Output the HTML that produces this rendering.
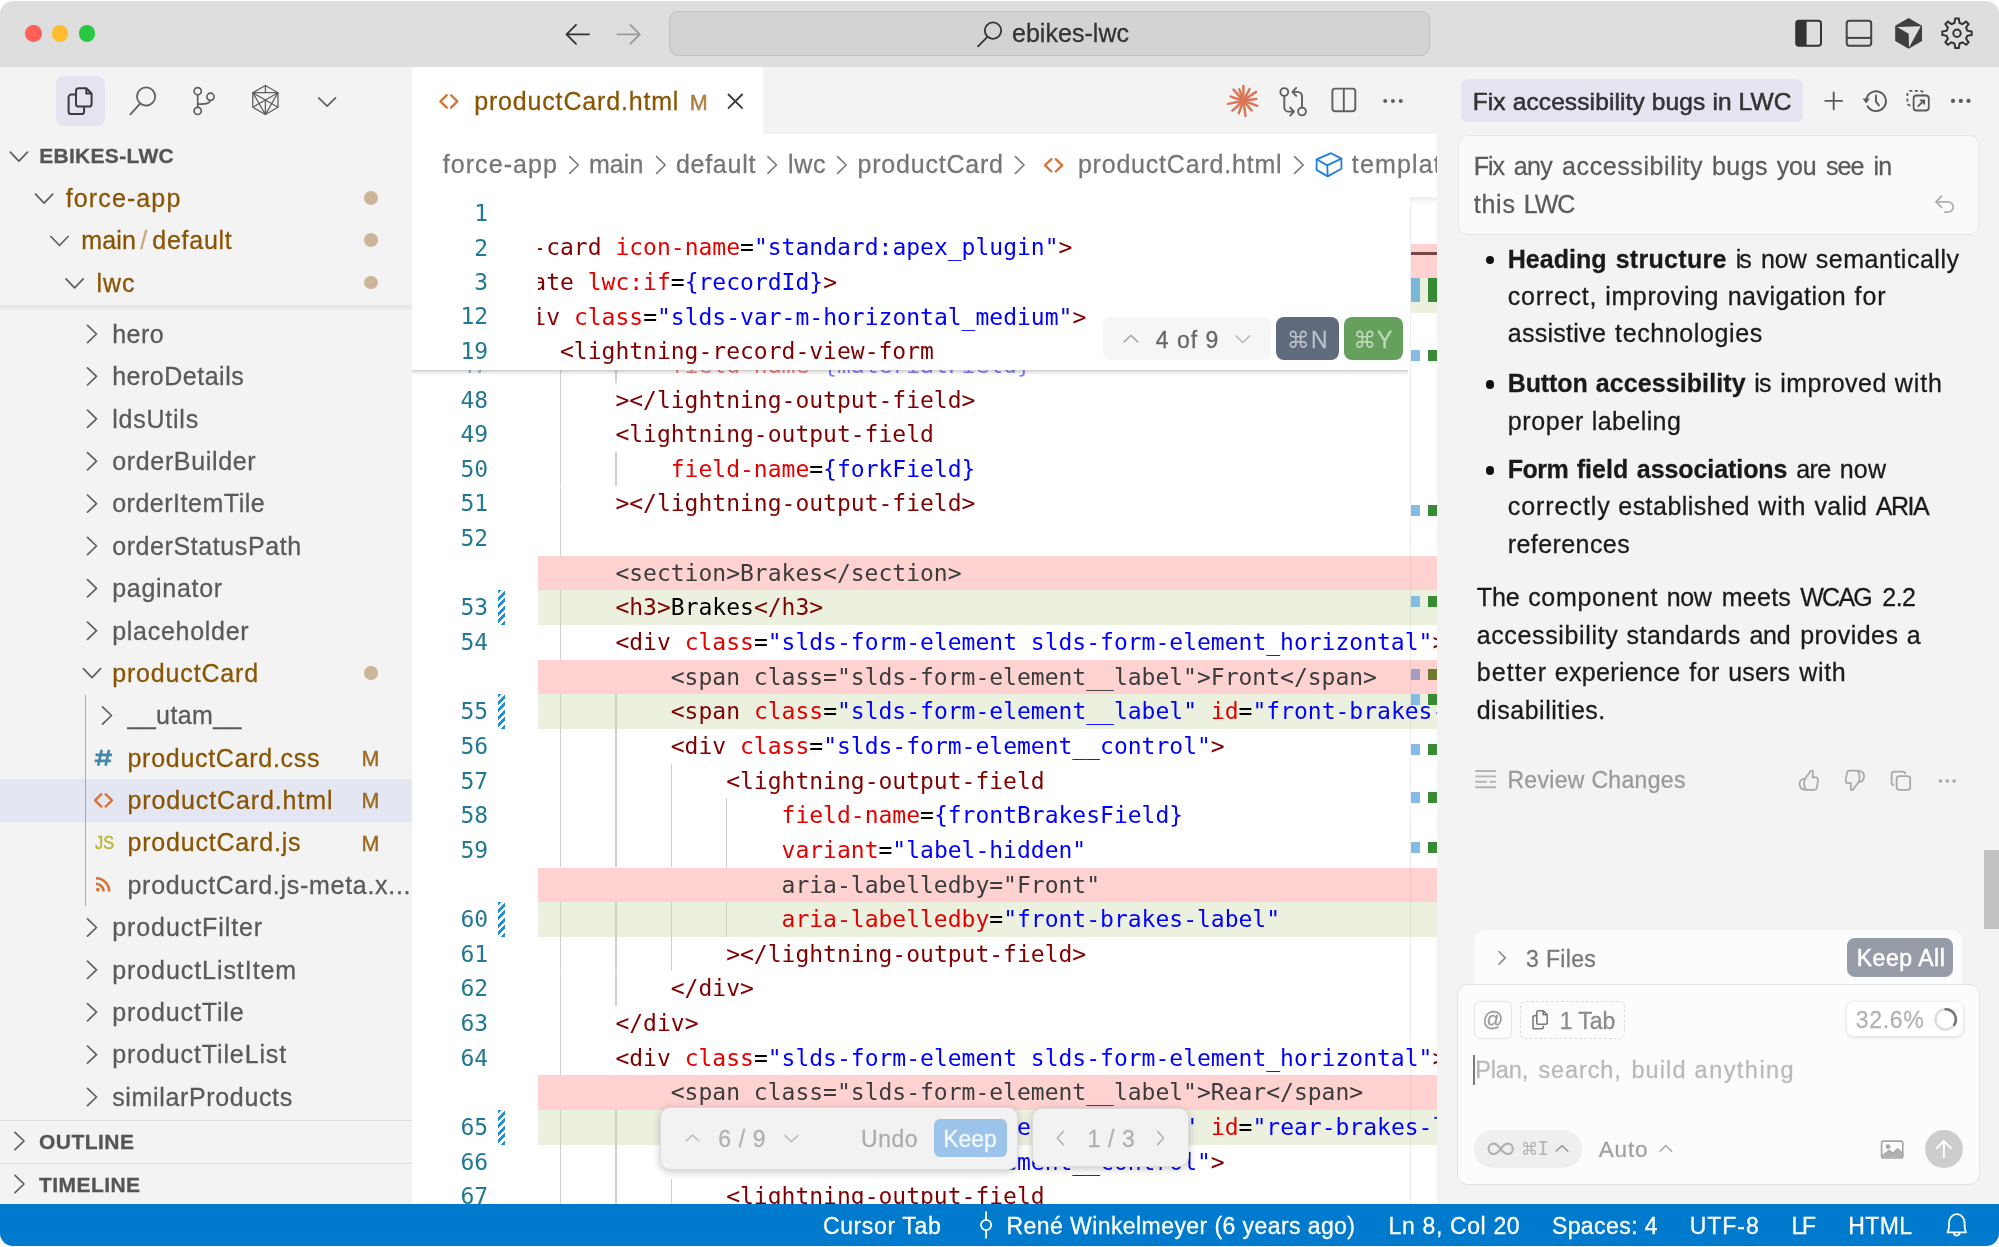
<!DOCTYPE html>
<html lang="en"><head><meta charset="utf-8"><title>ebikes-lwc</title>
<style>
html,body{margin:0;padding:0;background:#fff;}
body{width:1999px;height:1247px;overflow:hidden;position:relative;}
.fs{font-family:"Liberation Sans",sans-serif;-webkit-text-stroke:0.28px currentColor;}
.fm{font-family:"DejaVu Sans Mono","Liberation Mono",monospace;}
.t{position:absolute;white-space:pre;line-height:1;}
.a{position:absolute;box-sizing:border-box;}
#win{will-change:transform;position:absolute;left:0;top:0;width:1999px;height:1247px;overflow:hidden;background:#fff;clip-path:inset(1px 0px 1px 0px round 13px);}
#titlebar{position:absolute;left:0;top:0;width:1999px;height:67px;background:#dedede;}
#sidebar{position:absolute;left:0;top:67px;width:411.5px;height:1137px;background:#f3f3f3;}
#editor{position:absolute;left:411.5px;top:67px;width:1025.5px;height:1137px;background:#fff;}
#panel{position:absolute;left:1437px;top:67px;width:562px;height:1137px;background:#f3f3f3;}
#status{position:absolute;left:0;top:1204px;width:1999px;height:43px;background:#007acc;}
svg{position:absolute;overflow:visible;}
.ic{fill:none;stroke:#424242;stroke-width:1.9;stroke-linecap:round;stroke-linejoin:round;}
.k0{color:#800000}.k1{color:#e50000}.k2{color:#0000ff}.k3{color:#000}
.fd{font-family:"DejaVu Sans","Liberation Sans",sans-serif;}

</style></head>
<body>
<div id="win"><div id="titlebar"></div><div id="sidebar"></div><div id="editor"></div><div id="panel"></div><div id="status"></div><div class="a" style="left:25.0px;top:25.0px;width:16.6px;height:16.6px;border-radius:50%;background:#ff5f57;"></div><div class="a" style="left:51.9px;top:25.0px;width:16.6px;height:16.6px;border-radius:50%;background:#febc2e;"></div><div class="a" style="left:78.5px;top:25.0px;width:16.6px;height:16.6px;border-radius:50%;background:#28c840;"></div><div class="a" style="left:668.8px;top:11.0px;width:761.2px;height:44.6px;border-radius:9px;background:#d3d3d3;border:1.2px solid #c1c1c1;"></div><span class="t fs" style="top:21px;font-size:25px;color:#333;left:1012.00px;letter-spacing:0.033px;">ebikes-lwc</span><svg style="left:0;top:0" width="1999" height="1247" viewBox="0 0 1999 1247"><path d="M589.0 34.3H567.0M576.0 24.799999999999997L566.5 34.3L576.0 43.8" fill="none" stroke="#333" stroke-width="1.8" stroke-linecap="round" stroke-linejoin="round"/><g transform="translate(1256.6,0) scale(-1,1)"><path d="M639.3 34.3H617.3M626.3 24.799999999999997L616.8 34.3L626.3 43.8" fill="none" stroke="#9a9a9a" stroke-width="1.8" stroke-linecap="round" stroke-linejoin="round"/></g><circle cx="993" cy="30.6" r="8.2" fill="none" stroke="#333" stroke-width="1.8"/><path d="M987.4 36.8L978 46.4" stroke="#333" stroke-width="1.8" stroke-linecap="round"/></svg><svg style="left:0;top:0" width="1999" height="1247" viewBox="0 0 1999 1247"><rect x="1796.2" y="20.8" width="24.8" height="24.9" rx="2.6" fill="none" stroke="#333" stroke-width="2"/><path d="M1796.2 24 a3.2 3.2 0 0 1 3.2 -3.2 H1806.6 V45.7 H1799.4 a3.2 3.2 0 0 1 -3.2 -3.2Z" fill="#333"/><rect x="1846.7" y="20.8" width="24.5" height="24.9" rx="2.6" fill="none" stroke="#444" stroke-width="2"/><path d="M1846.7 37.9H1871.2" stroke="#444" stroke-width="2"/><path d="M1908.6 18 L1922 25.7 V41.1 L1908.6 48.8 L1895.2 41.1 V25.7Z" fill="#3f3f3f"/><path d="M1897.1 26.9 L1920.8 26.3 L1909 47.4 L1908.7 33.7Z" fill="#dedede"/><path d="M1954.44 22.91L1955.26 18.50L1958.74 18.50L1959.56 22.91L1962.47 24.12L1966.16 21.58L1968.62 24.04L1966.08 27.73L1967.29 30.64L1971.70 31.46L1971.70 34.94L1967.29 35.76L1966.08 38.67L1968.62 42.36L1966.16 44.82L1962.47 42.28L1959.56 43.49L1958.74 47.90L1955.26 47.90L1954.44 43.49L1951.53 42.28L1947.84 44.82L1945.38 42.36L1947.92 38.67L1946.71 35.76L1942.30 34.94L1942.30 31.46L1946.71 30.64L1947.92 27.73L1945.38 24.04L1947.84 21.58L1951.53 24.12Z" fill="none" stroke="#333" stroke-width="2" stroke-linejoin="miter"/><circle cx="1957" cy="33.2" r="3.7" fill="none" stroke="#333" stroke-width="2"/></svg><div class="a" style="left:56.0px;top:76.0px;width:49.3px;height:50.0px;border-radius:8px;background:#e4e4f1;"></div><svg style="left:0;top:0" width="1999" height="1247" viewBox="0 0 1999 1247"><path d="M75.7 94.6H71.2a2.6 2.6 0 0 0 -2.6 2.6V111.4a2.6 2.6 0 0 0 2.6 2.6H81.5a2.6 2.6 0 0 0 2.6 -2.6V107.3" fill="none" stroke="#3b3b3b" stroke-width="2" stroke-linejoin="round"/><path d="M78.6 88.2H86.3L91.6 93.5V103.9a2.6 2.6 0 0 1 -2.6 2.6H78.6a2.6 2.6 0 0 1 -2.6 -2.6V90.8a2.6 2.6 0 0 1 2.6 -2.6Z M86.3 88.2V93.5H91.6" fill="none" stroke="#3b3b3b" stroke-width="2" stroke-linejoin="round"/><circle cx="146.1" cy="96.5" r="9.1" fill="none" stroke="#5f5f5f" stroke-width="1.8"/><path d="M140.1 103.6L130.4 114.3" stroke="#5f5f5f" stroke-width="1.8" stroke-linecap="round"/><g fill="none" stroke="#5f5f5f" stroke-width="1.7"><circle cx="197.7" cy="91.2" r="3.6"/><circle cx="197.7" cy="110.9" r="3.6"/><circle cx="210.5" cy="96.8" r="3.6"/><path d="M197.7 94.8V107.3M197.7 104.2C205 103.8 209.6 104 210.3 100.4"/></g><g fill="none" stroke="#5f5f5f" stroke-width="1.3" stroke-linejoin="round"><path d="M265.4 85.5L278 92.7V107.3L265.4 114.5L252.8 107.3V92.7Z"/><path d="M252.8 92.7H278L265.4 114.5ZM265.4 85.5V92.7M252.8 92.7L265.4 100L278 92.7M265.4 100V114.5M252.8 107.3L265.4 100M265.4 100L278 107.3M270 106.5L278 92.7"/></g><polyline points="318.7,97.8 327.1,106.2 335.5,97.8" fill="none" stroke="#5f5f5f" stroke-width="1.7" stroke-linecap="round" stroke-linejoin="round"/></svg><span class="t fs" style="top:145px;font-size:21px;color:#555;left:39.20px;font-weight:700;letter-spacing:0.295px;">EBIKES-LWC</span><span class="t fs" style="top:186px;font-size:25px;color:#895503;left:65.80px;letter-spacing:1.109px;">force-app</span><span class="t fs" style="top:228px;font-size:25px;color:#895503;left:81.20px;letter-spacing:0.171px;">main</span><span class="t fs" style="top:228px;font-size:25px;color:#c9a97c;left:140.30px;">/</span><span class="t fs" style="top:228px;font-size:25px;color:#895503;left:152.30px;letter-spacing:0.740px;">default</span><span class="t fs" style="top:271px;font-size:25px;color:#895503;left:96.60px;letter-spacing:0.945px;">lwc</span><div class="a" style="left:364.1px;top:190.9px;width:13.8px;height:13.8px;border-radius:50%;background:#cdb599;"></div><div class="a" style="left:364.1px;top:233.3px;width:13.8px;height:13.8px;border-radius:50%;background:#cdb599;"></div><div class="a" style="left:364.1px;top:275.7px;width:13.8px;height:13.8px;border-radius:50%;background:#cdb599;"></div><div class="a" style="left:364.1px;top:666.0px;width:13.8px;height:13.8px;border-radius:50%;background:#cdb599;"></div><div class="a" style="left:0.0px;top:304.5px;width:411.5px;height:6.5px;background:linear-gradient(#e3e3e3,#f3f3f3);"></div><span class="t fs" style="top:322px;font-size:25px;color:#5a5a5a;left:112.20px;letter-spacing:0.484px;">hero</span><span class="t fs" style="top:364px;font-size:25px;color:#5a5a5a;left:112.20px;letter-spacing:0.505px;">heroDetails</span><span class="t fs" style="top:407px;font-size:25px;color:#5a5a5a;left:112.20px;letter-spacing:0.775px;">ldsUtils</span><span class="t fs" style="top:449px;font-size:25px;color:#5a5a5a;left:112.20px;letter-spacing:0.665px;">orderBuilder</span><span class="t fs" style="top:491px;font-size:25px;color:#5a5a5a;left:112.20px;letter-spacing:0.513px;">orderItemTile</span><span class="t fs" style="top:534px;font-size:25px;color:#5a5a5a;left:112.20px;letter-spacing:0.595px;">orderStatusPath</span><span class="t fs" style="top:576px;font-size:25px;color:#5a5a5a;left:112.20px;letter-spacing:0.719px;">paginator</span><span class="t fs" style="top:619px;font-size:25px;color:#5a5a5a;left:112.20px;letter-spacing:0.723px;">placeholder</span><span class="t fs" style="top:661px;font-size:25px;color:#895503;left:112.20px;letter-spacing:0.842px;">productCard</span><div class="a" style="left:0.0px;top:779.0px;width:411.5px;height:42.5px;background:#e4e6f1;"></div><div class="a" style="left:85.0px;top:695.0px;width:1.2px;height:210.5px;background:#a9a9a9;"></div><span class="t fs" style="top:703px;font-size:25px;color:#5a5a5a;left:127.50px;letter-spacing:0.400px;">__utam__</span><span class="t fs" style="top:746px;font-size:25px;color:#895503;left:127.50px;letter-spacing:0.712px;">productCard.css</span><span class="t fs" style="top:749px;font-size:21.5px;color:#9c6c22;left:361.60px;-webkit-text-stroke:0.45px #9c6c22;">M</span><span class="t fs" style="top:788px;font-size:25px;color:#895503;left:127.50px;letter-spacing:0.883px;">productCard.html</span><span class="t fs" style="top:791px;font-size:21.5px;color:#9c6c22;left:361.60px;-webkit-text-stroke:0.45px #9c6c22;">M</span><span class="t fs" style="top:830px;font-size:25px;color:#895503;left:127.50px;letter-spacing:0.802px;">productCard.js</span><span class="t fs" style="top:834px;font-size:21.5px;color:#9c6c22;left:361.60px;-webkit-text-stroke:0.45px #9c6c22;">M</span><span class="t fs" style="top:873px;font-size:25px;color:#5a5a5a;left:127.50px;letter-spacing:0.706px;">productCard.js-meta.x...</span><span class="t fs" style="top:915px;font-size:25px;color:#5a5a5a;left:112.20px;letter-spacing:0.921px;">productFilter</span><span class="t fs" style="top:958px;font-size:25px;color:#5a5a5a;left:112.20px;letter-spacing:0.934px;">productListItem</span><span class="t fs" style="top:1000px;font-size:25px;color:#5a5a5a;left:112.20px;letter-spacing:0.875px;">productTile</span><span class="t fs" style="top:1042px;font-size:25px;color:#5a5a5a;left:112.20px;letter-spacing:0.882px;">productTileList</span><span class="t fs" style="top:1085px;font-size:25px;color:#5a5a5a;left:112.20px;letter-spacing:0.652px;">similarProducts</span><span class="t fs" style="top:833px;font-size:19px;color:#b8b83a;left:94.60px;-webkit-text-stroke:0.5px #b8b83a;transform:scaleX(0.86);transform-origin:0 0;">JS</span><div class="a" style="left:0.0px;top:1120.0px;width:411.5px;height:1.3px;background:#dcdcdc;"></div><div class="a" style="left:0.0px;top:1162.7px;width:411.5px;height:1.3px;background:#dcdcdc;"></div><span class="t fs" style="top:1131px;font-size:21px;color:#555;left:39.00px;font-weight:700;letter-spacing:0.471px;">OUTLINE</span><span class="t fs" style="top:1174px;font-size:21px;color:#555;left:39.00px;font-weight:700;letter-spacing:0.429px;">TIMELINE</span><svg style="left:0;top:0" width="1999" height="1247" viewBox="0 0 1999 1247"><polyline points="10.3,152.1 18.9,161.1 27.5,152.1" fill="none" stroke="#5f5f5f" stroke-width="1.7" stroke-linecap="round" stroke-linejoin="round"/><polyline points="35.5,194.1 44.1,203.1 52.7,194.1" fill="none" stroke="#5f5f5f" stroke-width="1.7" stroke-linecap="round" stroke-linejoin="round"/><polyline points="50.9,236.5 59.5,245.5 68.1,236.5" fill="none" stroke="#5f5f5f" stroke-width="1.7" stroke-linecap="round" stroke-linejoin="round"/><polyline points="66.0,278.9 74.6,287.9 83.2,278.9" fill="none" stroke="#5f5f5f" stroke-width="1.7" stroke-linecap="round" stroke-linejoin="round"/><polyline points="87.5,325.4 96.5,334.0 87.5,342.6" fill="none" stroke="#5f5f5f" stroke-width="1.7" stroke-linecap="round" stroke-linejoin="round"/><polyline points="87.5,367.8 96.5,376.4 87.5,385.0" fill="none" stroke="#5f5f5f" stroke-width="1.7" stroke-linecap="round" stroke-linejoin="round"/><polyline points="87.5,410.2 96.5,418.8 87.5,427.4" fill="none" stroke="#5f5f5f" stroke-width="1.7" stroke-linecap="round" stroke-linejoin="round"/><polyline points="87.5,452.6 96.5,461.2 87.5,469.8" fill="none" stroke="#5f5f5f" stroke-width="1.7" stroke-linecap="round" stroke-linejoin="round"/><polyline points="87.5,495.0 96.5,503.6 87.5,512.2" fill="none" stroke="#5f5f5f" stroke-width="1.7" stroke-linecap="round" stroke-linejoin="round"/><polyline points="87.5,537.4 96.5,546.0 87.5,554.6" fill="none" stroke="#5f5f5f" stroke-width="1.7" stroke-linecap="round" stroke-linejoin="round"/><polyline points="87.5,579.7 96.5,588.3 87.5,596.9" fill="none" stroke="#5f5f5f" stroke-width="1.7" stroke-linecap="round" stroke-linejoin="round"/><polyline points="87.5,622.1 96.5,630.7 87.5,639.3" fill="none" stroke="#5f5f5f" stroke-width="1.7" stroke-linecap="round" stroke-linejoin="round"/><polyline points="83.4,668.6 92.0,677.6 100.6,668.6" fill="none" stroke="#5f5f5f" stroke-width="1.7" stroke-linecap="round" stroke-linejoin="round"/><polyline points="102.5,706.9 111.5,715.5 102.5,724.1" fill="none" stroke="#5f5f5f" stroke-width="1.7" stroke-linecap="round" stroke-linejoin="round"/><polyline points="87.5,918.9 96.5,927.5 87.5,936.1" fill="none" stroke="#5f5f5f" stroke-width="1.7" stroke-linecap="round" stroke-linejoin="round"/><polyline points="87.5,961.2 96.5,969.9 87.5,978.5" fill="none" stroke="#5f5f5f" stroke-width="1.7" stroke-linecap="round" stroke-linejoin="round"/><polyline points="87.5,1003.6 96.5,1012.2 87.5,1020.8" fill="none" stroke="#5f5f5f" stroke-width="1.7" stroke-linecap="round" stroke-linejoin="round"/><polyline points="87.5,1046.0 96.5,1054.6 87.5,1063.2" fill="none" stroke="#5f5f5f" stroke-width="1.7" stroke-linecap="round" stroke-linejoin="round"/><polyline points="87.5,1088.4 96.5,1097.0 87.5,1105.6" fill="none" stroke="#5f5f5f" stroke-width="1.7" stroke-linecap="round" stroke-linejoin="round"/><g stroke="#4289a8" stroke-width="2.7" stroke-linecap="butt"><path d="M101.6 749.8L98.2 765.8M109 749.8L105.600 765.8M95.6 754.9H112M94.600 760.9H111"/></g><polyline points="101.4,794.2 95.0,800.4 101.4,806.6" fill="none" stroke="#d4733a" stroke-width="2.3" stroke-linecap="round" stroke-linejoin="round"/><polyline points="105.6,794.2 112.0,800.4 105.6,806.6" fill="none" stroke="#d4733a" stroke-width="2.3" stroke-linecap="round" stroke-linejoin="round"/><g fill="none" stroke="#d4733a" stroke-width="2.6" stroke-linecap="butt"><path d="M96 878.2a13.2 13.2 0 0 1 13.2 13.2"/><path d="M96 883.8a7.6 7.6 0 0 1 7.6 7.6"/></g><circle cx="97.9" cy="889.6" r="1.9" fill="#d4733a"/><polyline points="15.0,1132.4 24.0,1141.0 15.0,1149.6" fill="none" stroke="#5f5f5f" stroke-width="1.7" stroke-linecap="round" stroke-linejoin="round"/><polyline points="15.0,1175.4 24.0,1184.0 15.0,1192.6" fill="none" stroke="#5f5f5f" stroke-width="1.7" stroke-linecap="round" stroke-linejoin="round"/></svg><div class="a" style="left:411.5px;top:67.0px;width:1025.5px;height:67.4px;background:#f3f3f3;"></div><div class="a" style="left:411.5px;top:67.0px;width:351.4px;height:67.4px;background:#fff;"></div><span class="t fs" style="top:89px;font-size:25px;color:#895503;left:474.20px;letter-spacing:0.830px;">productCard.html</span><span class="t fs" style="top:93px;font-size:21.5px;color:#ad8040;left:689.80px;-webkit-text-stroke:0.5px #ad8040;">M</span><span class="t fs" style="top:152px;font-size:25px;color:#767676;left:442.70px;letter-spacing:1.072px;">force-app</span><span class="t fs" style="top:152px;font-size:25px;color:#767676;left:589.00px;letter-spacing:0.037px;">main</span><span class="t fs" style="top:152px;font-size:25px;color:#767676;left:675.90px;letter-spacing:0.740px;">default</span><span class="t fs" style="top:152px;font-size:25px;color:#767676;left:788.00px;letter-spacing:0.645px;">lwc</span><span class="t fs" style="top:152px;font-size:25px;color:#767676;left:857.60px;letter-spacing:0.772px;">productCard</span><span class="t fs" style="top:152px;font-size:25px;color:#767676;left:1077.90px;letter-spacing:0.797px;">productCard.html</span><div class="a" style="left:1351.8px;top:140.0px;width:85.2px;height:55.0px;overflow:hidden;"><span class="t fs" style="top:12px;font-size:25px;color:#767676;left:0.00px;letter-spacing:1.158px;">template</span></div><svg style="left:0;top:0" width="1999" height="1247" viewBox="0 0 1999 1247"><polyline points="569.7,156.6 578.3,165.0 569.7,173.4" fill="none" stroke="#7a7a7a" stroke-width="1.6" stroke-linecap="round" stroke-linejoin="round"/><polyline points="656.6,156.6 665.2,165.0 656.6,173.4" fill="none" stroke="#7a7a7a" stroke-width="1.6" stroke-linecap="round" stroke-linejoin="round"/><polyline points="767.9,156.6 776.5,165.0 767.9,173.4" fill="none" stroke="#7a7a7a" stroke-width="1.6" stroke-linecap="round" stroke-linejoin="round"/><polyline points="837.6,156.6 846.2,165.0 837.6,173.4" fill="none" stroke="#7a7a7a" stroke-width="1.6" stroke-linecap="round" stroke-linejoin="round"/><polyline points="1015.4,156.6 1024.0,165.0 1015.4,173.4" fill="none" stroke="#7a7a7a" stroke-width="1.6" stroke-linecap="round" stroke-linejoin="round"/><polyline points="1294.6,156.6 1303.2,165.0 1294.6,173.4" fill="none" stroke="#7a7a7a" stroke-width="1.6" stroke-linecap="round" stroke-linejoin="round"/><polyline points="446.8,95.2 440.4,101.4 446.8,107.6" fill="none" stroke="#d4733a" stroke-width="2.3" stroke-linecap="round" stroke-linejoin="round"/><polyline points="451.0,95.2 457.4,101.4 451.0,107.6" fill="none" stroke="#d4733a" stroke-width="2.3" stroke-linecap="round" stroke-linejoin="round"/><polyline points="1051.4,159.1 1045.0,165.3 1051.4,171.5" fill="none" stroke="#d4733a" stroke-width="2.3" stroke-linecap="round" stroke-linejoin="round"/><polyline points="1055.8,159.1 1062.2,165.3 1055.8,171.5" fill="none" stroke="#d4733a" stroke-width="2.3" stroke-linecap="round" stroke-linejoin="round"/><path d="M728 94L742.6 108.6M742.6 94L728 108.6" stroke="#3b3b3b" stroke-width="1.9" stroke-linecap="butt"/><g fill="none" stroke="#1f7fdc" stroke-width="1.8" stroke-linejoin="round"><path d="M1316.6 159.3L1331.1 153.200L1341.4 158.6V168.8L1327.7 176.400L1316.6 169.9Z"/><path d="M1316.6 159.3L1327.2 165.4L1341.4 158.6M1327.2 165.4L1327.7 176.400"/></g></svg><div class="a" style="left:538.0px;top:197.0px;width:899.0px;height:1007.0px;overflow:hidden;"><span class="t fm" style="top:157px;font-size:23px;color:#000;left:132.78px;opacity:0.5;"><span class="k1">field-name</span><span class="k3">=</span><span class="k2">{materialField}</span></span><div class="a" style="left:22.0px;top:172.0px;width:1.3px;height:13.6px;background:#d0d0d0;"></div><div class="a" style="left:77.4px;top:172.0px;width:1.3px;height:13.6px;background:#d0d0d0;"></div><div class="a" style="left:22.0px;top:185.6px;width:1.3px;height:34.6px;background:#d0d0d0;"></div><span class="t fm" style="top:192px;font-size:23px;color:#000;left:77.39px;"><span class="k0">&gt;</span><span class="k0">&lt;/lightning-output-field</span><span class="k0">&gt;</span></span><div class="a" style="left:22.0px;top:220.2px;width:1.3px;height:34.6px;background:#d0d0d0;"></div><span class="t fm" style="top:226px;font-size:23px;color:#000;left:77.39px;"><span class="k0">&lt;lightning-output-field</span></span><div class="a" style="left:22.0px;top:254.8px;width:1.3px;height:34.6px;background:#d0d0d0;"></div><div class="a" style="left:77.4px;top:254.8px;width:1.3px;height:34.6px;background:#d0d0d0;"></div><span class="t fm" style="top:261px;font-size:23px;color:#000;left:132.78px;"><span class="k1">field-name</span><span class="k3">=</span><span class="k2">{forkField}</span></span><div class="a" style="left:22.0px;top:289.5px;width:1.3px;height:34.6px;background:#d0d0d0;"></div><span class="t fm" style="top:295px;font-size:23px;color:#000;left:77.39px;"><span class="k0">&gt;</span><span class="k0">&lt;/lightning-output-field</span><span class="k0">&gt;</span></span><div class="a" style="left:22.0px;top:324.1px;width:1.3px;height:34.6px;background:#d0d0d0;"></div><div class="a" style="left:0.0px;top:358.8px;width:900.0px;height:34.6px;background:#ffd2d2;"></div><span class="t fm" style="top:365px;font-size:23px;color:#3b3b3b;left:77.39px;"><span class="kr">&lt;section&gt;Brakes&lt;/section&gt;</span></span><div class="a" style="left:0.0px;top:393.4px;width:900.0px;height:34.6px;background:#ebf0df;"></div><div class="a" style="left:22.0px;top:393.4px;width:1.3px;height:34.6px;background:#cfd3c6;"></div><span class="t fm" style="top:399px;font-size:23px;color:#000;left:77.39px;"><span class="k0">&lt;h3</span><span class="k0">&gt;</span><span class="k3">Brakes</span><span class="k0">&lt;/h3</span><span class="k0">&gt;</span></span><div class="a" style="left:22.0px;top:428.1px;width:1.3px;height:34.6px;background:#d0d0d0;"></div><span class="t fm" style="top:434px;font-size:23px;color:#000;left:77.39px;"><span class="k0">&lt;div</span><span class="k3"> </span><span class="k1">class</span><span class="k3">=</span><span class="k2">"slds-form-element slds-form-element_horizontal"</span><span class="k0">&gt;</span></span><div class="a" style="left:0.0px;top:462.7px;width:900.0px;height:34.6px;background:#ffd2d2;"></div><span class="t fm" style="top:469px;font-size:23px;color:#3b3b3b;left:132.78px;"><span class="kr">&lt;span class="slds-form-element__label"&gt;Front&lt;/span&gt;</span></span><div class="a" style="left:0.0px;top:497.3px;width:900.0px;height:34.6px;background:#ebf0df;"></div><div class="a" style="left:22.0px;top:497.3px;width:1.3px;height:34.6px;background:#cfd3c6;"></div><div class="a" style="left:77.4px;top:497.3px;width:1.3px;height:34.6px;background:#cfd3c6;"></div><span class="t fm" style="top:503px;font-size:23px;color:#000;left:132.78px;"><span class="k0">&lt;span</span><span class="k3"> </span><span class="k1">class</span><span class="k3">=</span><span class="k2">"slds-form-element__label"</span><span class="k3"> </span><span class="k1">id</span><span class="k3">=</span><span class="k2">"front-brakes-label"</span><span class="k0">&gt;</span><span class="k3">Front</span><span class="k0">&lt;/span</span><span class="k0">&gt;</span></span><div class="a" style="left:22.0px;top:532.0px;width:1.3px;height:34.6px;background:#d0d0d0;"></div><div class="a" style="left:77.4px;top:532.0px;width:1.3px;height:34.6px;background:#d0d0d0;"></div><span class="t fm" style="top:538px;font-size:23px;color:#000;left:132.78px;"><span class="k0">&lt;div</span><span class="k3"> </span><span class="k1">class</span><span class="k3">=</span><span class="k2">"slds-form-element__control"</span><span class="k0">&gt;</span></span><div class="a" style="left:22.0px;top:566.6px;width:1.3px;height:34.6px;background:#d0d0d0;"></div><div class="a" style="left:77.4px;top:566.6px;width:1.3px;height:34.6px;background:#d0d0d0;"></div><div class="a" style="left:132.8px;top:566.6px;width:1.3px;height:34.6px;background:#d0d0d0;"></div><span class="t fm" style="top:573px;font-size:23px;color:#000;left:188.16px;"><span class="k0">&lt;lightning-output-field</span></span><div class="a" style="left:22.0px;top:601.3px;width:1.3px;height:34.6px;background:#d0d0d0;"></div><div class="a" style="left:77.4px;top:601.3px;width:1.3px;height:34.6px;background:#d0d0d0;"></div><div class="a" style="left:132.8px;top:601.3px;width:1.3px;height:34.6px;background:#d0d0d0;"></div><div class="a" style="left:188.2px;top:601.3px;width:1.3px;height:34.6px;background:#d0d0d0;"></div><span class="t fm" style="top:607px;font-size:23px;color:#000;left:243.55px;"><span class="k1">field-name</span><span class="k3">=</span><span class="k2">{frontBrakesField}</span></span><div class="a" style="left:22.0px;top:635.9px;width:1.3px;height:34.6px;background:#d0d0d0;"></div><div class="a" style="left:77.4px;top:635.9px;width:1.3px;height:34.6px;background:#d0d0d0;"></div><div class="a" style="left:132.8px;top:635.9px;width:1.3px;height:34.6px;background:#d0d0d0;"></div><div class="a" style="left:188.2px;top:635.9px;width:1.3px;height:34.6px;background:#d0d0d0;"></div><span class="t fm" style="top:642px;font-size:23px;color:#000;left:243.55px;"><span class="k1">variant</span><span class="k3">=</span><span class="k2">"label-hidden"</span></span><div class="a" style="left:0.0px;top:670.6px;width:900.0px;height:34.6px;background:#ffd2d2;"></div><span class="t fm" style="top:677px;font-size:23px;color:#3b3b3b;left:243.55px;"><span class="kr">aria-labelledby="Front"</span></span><div class="a" style="left:0.0px;top:705.2px;width:900.0px;height:34.6px;background:#ebf0df;"></div><div class="a" style="left:22.0px;top:705.2px;width:1.3px;height:34.6px;background:#cfd3c6;"></div><div class="a" style="left:77.4px;top:705.2px;width:1.3px;height:34.6px;background:#cfd3c6;"></div><div class="a" style="left:132.8px;top:705.2px;width:1.3px;height:34.6px;background:#cfd3c6;"></div><div class="a" style="left:188.2px;top:705.2px;width:1.3px;height:34.6px;background:#cfd3c6;"></div><span class="t fm" style="top:711px;font-size:23px;color:#000;left:243.55px;"><span class="k1">aria-labelledby</span><span class="k3">=</span><span class="k2">"front-brakes-label"</span></span><div class="a" style="left:22.0px;top:739.8px;width:1.3px;height:34.6px;background:#d0d0d0;"></div><div class="a" style="left:77.4px;top:739.8px;width:1.3px;height:34.6px;background:#d0d0d0;"></div><div class="a" style="left:132.8px;top:739.8px;width:1.3px;height:34.6px;background:#d0d0d0;"></div><span class="t fm" style="top:746px;font-size:23px;color:#000;left:188.16px;"><span class="k0">&gt;</span><span class="k0">&lt;/lightning-output-field</span><span class="k0">&gt;</span></span><div class="a" style="left:22.0px;top:774.5px;width:1.3px;height:34.6px;background:#d0d0d0;"></div><div class="a" style="left:77.4px;top:774.5px;width:1.3px;height:34.6px;background:#d0d0d0;"></div><span class="t fm" style="top:780px;font-size:23px;color:#000;left:132.78px;"><span class="k0">&lt;/div</span><span class="k0">&gt;</span></span><div class="a" style="left:22.0px;top:809.1px;width:1.3px;height:34.6px;background:#d0d0d0;"></div><span class="t fm" style="top:815px;font-size:23px;color:#000;left:77.39px;"><span class="k0">&lt;/div</span><span class="k0">&gt;</span></span><div class="a" style="left:22.0px;top:843.8px;width:1.3px;height:34.6px;background:#d0d0d0;"></div><span class="t fm" style="top:850px;font-size:23px;color:#000;left:77.39px;"><span class="k0">&lt;div</span><span class="k3"> </span><span class="k1">class</span><span class="k3">=</span><span class="k2">"slds-form-element slds-form-element_horizontal"</span><span class="k0">&gt;</span></span><div class="a" style="left:0.0px;top:878.4px;width:900.0px;height:34.6px;background:#ffd2d2;"></div><span class="t fm" style="top:884px;font-size:23px;color:#3b3b3b;left:132.78px;"><span class="kr">&lt;span class="slds-form-element__label"&gt;Rear&lt;/span&gt;</span></span><div class="a" style="left:0.0px;top:913.1px;width:900.0px;height:34.6px;background:#ebf0df;"></div><div class="a" style="left:22.0px;top:913.1px;width:1.3px;height:34.6px;background:#cfd3c6;"></div><div class="a" style="left:77.4px;top:913.1px;width:1.3px;height:34.6px;background:#cfd3c6;"></div><span class="t fm" style="top:919px;font-size:23px;color:#000;left:132.78px;"><span class="k0">&lt;span</span><span class="k3"> </span><span class="k1">class</span><span class="k3">=</span><span class="k2">"slds-form-element__label"</span><span class="k3"> </span><span class="k1">id</span><span class="k3">=</span><span class="k2">"rear-brakes-label"</span><span class="k0">&gt;</span><span class="k3">Rear</span><span class="k0">&lt;/span</span><span class="k0">&gt;</span></span><div class="a" style="left:22.0px;top:947.7px;width:1.3px;height:34.6px;background:#d0d0d0;"></div><div class="a" style="left:77.4px;top:947.7px;width:1.3px;height:34.6px;background:#d0d0d0;"></div><span class="t fm" style="top:954px;font-size:23px;color:#000;left:132.78px;"><span class="k0">&lt;div</span><span class="k3"> </span><span class="k1">class</span><span class="k3">=</span><span class="k2">"slds-form-element__control"</span><span class="k0">&gt;</span></span><div class="a" style="left:22.0px;top:982.3px;width:1.3px;height:34.6px;background:#d0d0d0;"></div><div class="a" style="left:77.4px;top:982.3px;width:1.3px;height:34.6px;background:#d0d0d0;"></div><div class="a" style="left:132.8px;top:982.3px;width:1.3px;height:34.6px;background:#d0d0d0;"></div><span class="t fm" style="top:988px;font-size:23px;color:#000;left:188.16px;"><span class="k0">&lt;lightning-output-field</span></span></div><span class="t fm" style="top:389px;font-size:23px;color:#237893;right:1510.80px;">48</span><span class="t fm" style="top:423px;font-size:23px;color:#237893;right:1510.80px;">49</span><span class="t fm" style="top:458px;font-size:23px;color:#237893;right:1510.80px;">50</span><span class="t fm" style="top:492px;font-size:23px;color:#237893;right:1510.80px;">51</span><span class="t fm" style="top:527px;font-size:23px;color:#237893;right:1510.80px;">52</span><span class="t fm" style="top:596px;font-size:23px;color:#237893;right:1510.80px;">53</span><div class="a" style="left:498.3px;top:590.4px;width:6.7px;height:34.6px;background:repeating-linear-gradient(135deg,#2490d8 0 2.6px,#fff 2.6px 5.3px);"></div><span class="t fm" style="top:631px;font-size:23px;color:#237893;right:1510.80px;">54</span><span class="t fm" style="top:700px;font-size:23px;color:#237893;right:1510.80px;">55</span><div class="a" style="left:498.3px;top:694.3px;width:6.7px;height:34.6px;background:repeating-linear-gradient(135deg,#2490d8 0 2.6px,#fff 2.6px 5.3px);"></div><span class="t fm" style="top:735px;font-size:23px;color:#237893;right:1510.80px;">56</span><span class="t fm" style="top:770px;font-size:23px;color:#237893;right:1510.80px;">57</span><span class="t fm" style="top:804px;font-size:23px;color:#237893;right:1510.80px;">58</span><span class="t fm" style="top:839px;font-size:23px;color:#237893;right:1510.80px;">59</span><span class="t fm" style="top:908px;font-size:23px;color:#237893;right:1510.80px;">60</span><div class="a" style="left:498.3px;top:902.2px;width:6.7px;height:34.6px;background:repeating-linear-gradient(135deg,#2490d8 0 2.6px,#fff 2.6px 5.3px);"></div><span class="t fm" style="top:943px;font-size:23px;color:#237893;right:1510.80px;">61</span><span class="t fm" style="top:977px;font-size:23px;color:#237893;right:1510.80px;">62</span><span class="t fm" style="top:1012px;font-size:23px;color:#237893;right:1510.80px;">63</span><span class="t fm" style="top:1047px;font-size:23px;color:#237893;right:1510.80px;">64</span><span class="t fm" style="top:1116px;font-size:23px;color:#237893;right:1510.80px;">65</span><div class="a" style="left:498.3px;top:1110.1px;width:6.7px;height:34.6px;background:repeating-linear-gradient(135deg,#2490d8 0 2.6px,#fff 2.6px 5.3px);"></div><span class="t fm" style="top:1151px;font-size:23px;color:#237893;right:1510.80px;">66</span><span class="t fm" style="top:1185px;font-size:23px;color:#237893;right:1510.80px;">67</span><span class="t fm" style="top:354px;font-size:23px;color:#237893;right:1510.80px;opacity:0.5;">47</span><div class="a" style="left:411.5px;top:196.0px;width:996.0px;height:188.0px;overflow:hidden;"><div class="a" style="left:-10.0px;top:0.0px;width:1020.0px;height:173.6px;background:#fff;box-shadow:0 2px 5px -1px rgba(0,0,0,0.3);"></div></div><span class="t fm" style="top:202px;font-size:23px;color:#237893;right:1510.80px;">1</span><span class="t fm" style="top:237px;font-size:23px;color:#237893;right:1510.80px;">2</span><span class="t fm" style="top:271px;font-size:23px;color:#237893;right:1510.80px;">3</span><span class="t fm" style="top:305px;font-size:23px;color:#237893;right:1510.80px;">12</span><span class="t fm" style="top:340px;font-size:23px;color:#237893;right:1510.80px;">19</span><div class="a" style="left:538.0px;top:197.0px;width:872.4px;height:172.6px;overflow:hidden;"><span class="t fm" style="top:5px;font-size:23px;color:#000;left:-199.55px;"><span class="k0">&lt;template</span><span class="k0">&gt;</span></span><span class="t fm" style="top:39px;font-size:23px;color:#000;left:-144.16px;"><span class="k0">&lt;lightning-card</span><span class="k3"> </span><span class="k1">icon-name</span><span class="k3">=</span><span class="k2">"standard:apex_plugin"</span><span class="k0">&gt;</span></span><span class="t fm" style="top:74px;font-size:23px;color:#000;left:-88.78px;"><span class="k0">&lt;template</span><span class="k3"> </span><span class="k1">lwc:if</span><span class="k3">=</span><span class="k2">{recordId}</span><span class="k0">&gt;</span></span><span class="t fm" style="top:109px;font-size:23px;color:#000;left:-33.39px;"><span class="k0">&lt;div</span><span class="k3"> </span><span class="k1">class</span><span class="k3">=</span><span class="k2">"slds-var-m-horizontal_medium"</span><span class="k0">&gt;</span></span><span class="t fm" style="top:143px;font-size:23px;color:#000;left:22.00px;"><span class="k0">&lt;lightning-record-view-form</span></span></div><div class="a" style="left:1102.6px;top:317.0px;width:168.4px;height:43.0px;background:#f6f6f6;border-radius:8px;"></div><span class="t fs" style="top:329px;font-size:23px;color:#666;left:1155.70px;letter-spacing:1.011px;">4 of 9</span><div class="a" style="left:1275.8px;top:317.0px;width:63.2px;height:43.0px;background:#5f6b7c;border-radius:8px;"></div><div class="a" style="left:1343.8px;top:317.0px;width:59.3px;height:43.0px;background:#65a15d;border-radius:8px;"></div><span class="t fd" style="top:329px;font-size:23px;color:#b9bfc9;left:1286.70px;">⌘</span><span class="t fs" style="top:329px;font-size:23px;color:#b9bfc9;left:1311.00px;">N</span><span class="t fd" style="top:329px;font-size:23px;color:#bcd8b8;left:1353.30px;">⌘</span><span class="t fs" style="top:329px;font-size:23px;color:#bcd8b8;left:1377.00px;">Y</span><svg style="left:0;top:0" width="1999" height="1247" viewBox="0 0 1999 1247"><polyline points="1124.1,341.9 1130.9,335.3 1137.7,341.9" fill="none" stroke="#a6a6a6" stroke-width="1.5" stroke-linecap="round" stroke-linejoin="round"/><polyline points="1236.0,335.9 1242.8,342.5 1249.6,335.9" fill="none" stroke="#b8b8b8" stroke-width="1.5" stroke-linecap="round" stroke-linejoin="round"/></svg><div class="a" style="left:1410.4px;top:196.5px;width:26.6px;height:1007.5px;border-left:1px solid rgba(0,0,0,0.07);background:linear-gradient(#eeeeee 0,#fff 8px) top/100% 8px no-repeat;"></div><div class="a" style="left:1411.0px;top:244.4px;width:26.0px;height:33.6px;background:#ffd2d2;"></div><div class="a" style="left:1411.0px;top:251.6px;width:26.0px;height:3.4px;background:#7a4545;"></div><div class="a" style="left:1411.0px;top:278.0px;width:26.0px;height:34.6px;background:#ebf0df;"></div><div class="a" style="left:1411.0px;top:278.0px;width:9.0px;height:24.0px;background:#7ab6d9;"></div><div class="a" style="left:1428.3px;top:278.0px;width:8.7px;height:24.0px;background:#388a34;"></div><div class="a" style="left:1411.0px;top:349.8px;width:9.0px;height:11.0px;background:#84bce6;"></div><div class="a" style="left:1428.3px;top:349.8px;width:8.7px;height:11.0px;background:#388a34;"></div><div class="a" style="left:1411.0px;top:505.4px;width:9.0px;height:11.0px;background:#84bce6;"></div><div class="a" style="left:1428.3px;top:505.4px;width:8.7px;height:11.0px;background:#388a34;"></div><div class="a" style="left:1411.0px;top:596.0px;width:9.0px;height:11.0px;background:#84bce6;"></div><div class="a" style="left:1428.3px;top:596.0px;width:8.7px;height:11.0px;background:#388a34;"></div><div class="a" style="left:1411.0px;top:669.4px;width:9.0px;height:11.0px;background:#a49cc2;"></div><div class="a" style="left:1428.3px;top:669.4px;width:8.7px;height:11.0px;background:#6f7a2e;"></div><div class="a" style="left:1411.0px;top:694.4px;width:9.0px;height:11.0px;background:#84bce6;"></div><div class="a" style="left:1428.3px;top:694.4px;width:8.7px;height:11.0px;background:#388a34;"></div><div class="a" style="left:1411.0px;top:744.0px;width:9.0px;height:11.0px;background:#84bce6;"></div><div class="a" style="left:1428.3px;top:744.0px;width:8.7px;height:11.0px;background:#388a34;"></div><div class="a" style="left:1411.0px;top:792.4px;width:9.0px;height:11.0px;background:#84bce6;"></div><div class="a" style="left:1428.3px;top:792.4px;width:8.7px;height:11.0px;background:#388a34;"></div><div class="a" style="left:1411.0px;top:842.0px;width:9.0px;height:11.0px;background:#84bce6;"></div><div class="a" style="left:1428.3px;top:842.0px;width:8.7px;height:11.0px;background:#388a34;"></div><svg style="left:0;top:0" width="1999" height="1247" viewBox="0 0 1999 1247"><path d="M1243.4 99.2L1243.4 86.1" stroke="#d97757" stroke-width="2.5" stroke-linecap="round"/><path d="M1244.1 99.4L1249.6 89.0" stroke="#d97757" stroke-width="2.5" stroke-linecap="round"/><path d="M1244.6 99.8L1256.0 91.9" stroke="#d97757" stroke-width="2.5" stroke-linecap="round"/><path d="M1244.9 100.5L1256.3 99.1" stroke="#d97757" stroke-width="2.5" stroke-linecap="round"/><path d="M1244.8 101.2L1257.3 105.8" stroke="#d97757" stroke-width="2.5" stroke-linecap="round"/><path d="M1244.4 101.8L1251.5 110.4" stroke="#d97757" stroke-width="2.5" stroke-linecap="round"/><path d="M1243.6 102.2L1245.5 115.8" stroke="#d97757" stroke-width="2.5" stroke-linecap="round"/><path d="M1242.9 102.1L1238.8 113.3" stroke="#d97757" stroke-width="2.5" stroke-linecap="round"/><path d="M1242.3 101.7L1232.4 110.6" stroke="#d97757" stroke-width="2.5" stroke-linecap="round"/><path d="M1241.9 101.0L1228.1 103.9" stroke="#d97757" stroke-width="2.5" stroke-linecap="round"/><path d="M1242.0 100.2L1230.7 96.6" stroke="#d97757" stroke-width="2.5" stroke-linecap="round"/><path d="M1242.4 99.6L1233.5 89.7" stroke="#d97757" stroke-width="2.5" stroke-linecap="round"/><path d="M1242.9 99.3L1239.3 89.4" stroke="#d97757" stroke-width="2.5" stroke-linecap="round"/><circle cx="1243.4" cy="100.7" r="4" fill="#d97757"/><g fill="none" stroke="#5f5f5f" stroke-width="1.9" stroke-linecap="round" stroke-linejoin="round"><circle cx="1284.3" cy="92" r="3.9"/><circle cx="1302" cy="111.5" r="3.9"/><path d="M1284.3 96V107.4a4.2 4.2 0 0 0 4.2 4.2H1293.6M1290.2 107.6L1294 111.6L1290.2 115.6"/><path d="M1302 107.5V96.1a4.2 4.2 0 0 0 -4.2 -4.2H1292.8M1296.2 87.9L1292.4 91.9L1296.2 95.9"/></g><g fill="none" stroke="#5f5f5f" stroke-width="1.9"><rect x="1332.4" y="88.6" width="22.9" height="22.6" rx="2.6"/><path d="M1343.8 88.6V111.2"/></g><circle cx="1385.2" cy="101" r="2" fill="#5f5f5f"/><circle cx="1392.9" cy="101" r="2" fill="#5f5f5f"/><circle cx="1400.7" cy="101" r="2" fill="#5f5f5f"/></svg><div class="a" style="left:659.8px;top:1106.8px;width:357.8px;height:62.8px;background:#f2f2f2;border:1.2px solid #dcdcdc;border-radius:10px;box-shadow:0 2px 8px rgba(0,0,0,0.22);"></div><span class="t fs" style="top:1128px;font-size:23px;color:#b0b0b0;left:718.30px;letter-spacing:0.634px;">6 / 9</span><span class="t fs" style="top:1128px;font-size:23px;color:#acacac;left:861.10px;letter-spacing:0.472px;">Undo</span><div class="a" style="left:934.3px;top:1118.9px;width:72.3px;height:37.9px;background:#9cc3ea;border-radius:6px;"></div><span class="t fs" style="top:1128px;font-size:23px;color:#f4f8fc;left:943.30px;letter-spacing:-0.106px;">Keep</span><div class="a" style="left:1031.5px;top:1108.4px;width:157.7px;height:59.0px;background:#f2f2f2;border:1.2px solid #dcdcdc;border-radius:10px;box-shadow:0 2px 8px rgba(0,0,0,0.22);"></div><span class="t fs" style="top:1128px;font-size:23px;color:#b0b0b0;left:1087.40px;letter-spacing:0.659px;">1 / 3</span><svg style="left:0;top:0" width="1999" height="1247" viewBox="0 0 1999 1247"><polyline points="686.1,1141.0 692.5,1135.0 698.9,1141.0" fill="none" stroke="#bdbdbd" stroke-width="1.6" stroke-linecap="round" stroke-linejoin="round"/><polyline points="785.0,1135.6 791.4,1141.6 797.8,1135.6" fill="none" stroke="#bdbdbd" stroke-width="1.6" stroke-linecap="round" stroke-linejoin="round"/><polyline points="1063.3,1131.4 1057.3,1138.0 1063.3,1144.6" fill="none" stroke="#b4b4b4" stroke-width="1.6" stroke-linecap="round" stroke-linejoin="round"/><polyline points="1157.6,1131.4 1163.6,1138.0 1157.6,1144.6" fill="none" stroke="#b4b4b4" stroke-width="1.6" stroke-linecap="round" stroke-linejoin="round"/></svg><div class="a" style="left:1460.5px;top:79.4px;width:342.4px;height:42.4px;background:#e5e5f1;border-radius:7px;"></div><span class="t fs" style="top:90px;font-size:24.5px;color:#333;left:1472.70px;letter-spacing:0.121px;-webkit-text-stroke:0.55px #333;">Fix accessibility bugs in LWC</span><svg style="left:0;top:0" width="1999" height="1247" viewBox="0 0 1999 1247"><path d="M1833.7 92.5V109.3M1825.3 100.9H1842.1" stroke="#5a5a5a" stroke-width="1.9" stroke-linecap="round"/><g fill="none" stroke="#5a5a5a" stroke-width="1.9" stroke-linecap="round" stroke-linejoin="round"><path d="M1866.2 100.4A9.9 9.9 0 1 1 1867.6 106.3"/><path d="M1876 95.4V101.6L1878.9 105.4"/></g><path d="M1862.6 98.600H1869.800L1866.200 103.600Z" fill="#5a5a5a"/><g fill="none" stroke="#5a5a5a" stroke-width="1.8" stroke-linecap="round" stroke-linejoin="round"><rect x="1913.6" y="95.5" width="15.2" height="15" rx="3"/><path d="M1910.4 105.6a3 3 0 0 1 -3 -3V93.800a3 3 0 0 1 3 -3H1920.6a3 3 0 0 1 3 3V95.400" stroke-dasharray="3.1 2.5" stroke-linecap="butt"/><path d="M1918.2 106.2L1924 100.5M1920.6 100.3H1924.200V103.800"/></g><circle cx="1953" cy="100.9" r="2.1" fill="#5a5a5a"/><circle cx="1960.8" cy="100.9" r="2.1" fill="#5a5a5a"/><circle cx="1968.5" cy="100.9" r="2.1" fill="#5a5a5a"/></svg><div class="a" style="left:1457.6px;top:135.4px;width:521.8px;height:99.8px;background:#fafafa;border:1.2px solid #e7e7e7;border-radius:10px;"></div><span class="t fs" style="top:154px;font-size:25px;color:#5c5c5c;left:1473.79px;letter-spacing:-1.021px;">Fix</span> <span class="t fs" style="top:154px;font-size:25px;color:#5c5c5c;left:1513.82px;letter-spacing:-0.669px;">any</span> <span class="t fs" style="top:154px;font-size:25px;color:#5c5c5c;left:1562.08px;letter-spacing:0.595px;">accessibility</span> <span class="t fs" style="top:154px;font-size:25px;color:#5c5c5c;left:1711.88px;letter-spacing:0.486px;">bugs</span> <span class="t fs" style="top:154px;font-size:25px;color:#5c5c5c;left:1776.83px;letter-spacing:-0.271px;">you</span> <span class="t fs" style="top:154px;font-size:25px;color:#5c5c5c;left:1825.88px;letter-spacing:-0.934px;">see</span> <span class="t fs" style="top:154px;font-size:25px;color:#5c5c5c;left:1873.61px;letter-spacing:-0.909px;">in</span><span class="t fs" style="top:192px;font-size:25px;color:#5c5c5c;left:1473.79px;letter-spacing:0.730px;">this</span> <span class="t fs" style="top:192px;font-size:25px;color:#5c5c5c;left:1523.63px;letter-spacing:-1.001px;">LWC</span><svg style="left:0;top:0" width="1999" height="1247" viewBox="0 0 1999 1247"><g fill="none" stroke="#b0b0b0" stroke-width="1.8" stroke-linecap="round" stroke-linejoin="round"><path d="M1941.6 196.2L1936 201.8L1941.6 207.4"/><path d="M1936.4 201.8H1948a5.2 5.2 0 0 1 0 10.4H1945"/></g></svg><span class="t fs" style="top:247px;font-size:25px;color:#1a1a1a;left:1507.72px;font-weight:700;letter-spacing:0.045px;">Heading</span> <span class="t fs" style="top:247px;font-size:25px;color:#1a1a1a;left:1615.63px;font-weight:700;letter-spacing:0.306px;">structure</span><span class="t fs" style="top:247px;font-size:25px;color:#1a1a1a;left:1735.74px;letter-spacing:-2.155px;">is</span> <span class="t fs" style="top:247px;font-size:25px;color:#1a1a1a;left:1760.93px;letter-spacing:-0.004px;">now</span> <span class="t fs" style="top:247px;font-size:25px;color:#1a1a1a;left:1815.81px;letter-spacing:0.510px;">semantically</span><span class="t fs" style="top:284px;font-size:25px;color:#1a1a1a;left:1507.72px;letter-spacing:0.780px;">correct,</span> <span class="t fs" style="top:284px;font-size:25px;color:#1a1a1a;left:1605.29px;letter-spacing:0.605px;">improving</span> <span class="t fs" style="top:284px;font-size:25px;color:#1a1a1a;left:1727.78px;letter-spacing:0.444px;">navigation</span> <span class="t fs" style="top:284px;font-size:25px;color:#1a1a1a;left:1854.52px;letter-spacing:0.916px;">for</span><span class="t fs" style="top:321px;font-size:25px;color:#1a1a1a;left:1507.72px;letter-spacing:0.278px;">assistive</span> <span class="t fs" style="top:321px;font-size:25px;color:#1a1a1a;left:1615.10px;letter-spacing:0.614px;">technologies</span><span class="t fs" style="top:371px;font-size:25px;color:#1a1a1a;left:1507.72px;font-weight:700;letter-spacing:-0.092px;">Button</span> <span class="t fs" style="top:371px;font-size:25px;color:#1a1a1a;left:1595.75px;font-weight:700;letter-spacing:0.090px;">accessibility</span><span class="t fs" style="top:371px;font-size:25px;color:#1a1a1a;left:1754.30px;letter-spacing:-0.829px;">is</span> <span class="t fs" style="top:371px;font-size:25px;color:#1a1a1a;left:1780.28px;letter-spacing:0.461px;">improved</span> <span class="t fs" style="top:371px;font-size:25px;color:#1a1a1a;left:1894.82px;letter-spacing:0.908px;">with</span><span class="t fs" style="top:409px;font-size:25px;color:#1a1a1a;left:1507.72px;letter-spacing:0.659px;">proper</span> <span class="t fs" style="top:409px;font-size:25px;color:#1a1a1a;left:1591.77px;letter-spacing:0.414px;">labeling</span><span class="t fs" style="top:457px;font-size:25px;color:#1a1a1a;left:1507.72px;font-weight:700;letter-spacing:-0.507px;">Form</span> <span class="t fs" style="top:457px;font-size:25px;color:#1a1a1a;left:1576.66px;font-weight:700;letter-spacing:0.074px;">field</span> <span class="t fs" style="top:457px;font-size:25px;color:#1a1a1a;left:1636.84px;font-weight:700;letter-spacing:-0.078px;">associations</span><span class="t fs" style="top:457px;font-size:25px;color:#1a1a1a;left:1796.19px;letter-spacing:-0.572px;">are</span> <span class="t fs" style="top:457px;font-size:25px;color:#1a1a1a;left:1839.67px;letter-spacing:0.262px;">now</span><span class="t fs" style="top:494px;font-size:25px;color:#1a1a1a;left:1507.72px;letter-spacing:0.951px;">correctly</span> <span class="t fs" style="top:494px;font-size:25px;color:#1a1a1a;left:1618.28px;letter-spacing:0.476px;">established</span> <span class="t fs" style="top:494px;font-size:25px;color:#1a1a1a;left:1758.27px;letter-spacing:0.908px;">with</span> <span class="t fs" style="top:494px;font-size:25px;color:#1a1a1a;left:1814.48px;letter-spacing:0.269px;">valid</span> <span class="t fs" style="top:494px;font-size:25px;color:#1a1a1a;left:1875.73px;letter-spacing:-1.424px;">ARIA</span><span class="t fs" style="top:532px;font-size:25px;color:#1a1a1a;left:1507.72px;letter-spacing:0.426px;">references</span><div class="a" style="left:1485.7px;top:255.5px;width:8.6px;height:8.6px;border-radius:50%;background:#111;"></div><div class="a" style="left:1485.7px;top:380.1px;width:8.6px;height:8.6px;border-radius:50%;background:#111;"></div><div class="a" style="left:1485.7px;top:466.1px;width:8.6px;height:8.6px;border-radius:50%;background:#111;"></div><span class="t fs" style="top:585px;font-size:25px;color:#1a1a1a;left:1476.70px;letter-spacing:-0.071px;">The</span> <span class="t fs" style="top:585px;font-size:25px;color:#1a1a1a;left:1528.14px;letter-spacing:0.710px;">component</span> <span class="t fs" style="top:585px;font-size:25px;color:#1a1a1a;left:1666.80px;letter-spacing:-0.401px;">now</span> <span class="t fs" style="top:585px;font-size:25px;color:#1a1a1a;left:1721.69px;letter-spacing:0.276px;">meets</span> <span class="t fs" style="top:585px;font-size:25px;color:#1a1a1a;left:1800.16px;letter-spacing:-1.712px;">WCAG</span> <span class="t fs" style="top:585px;font-size:25px;color:#1a1a1a;left:1882.36px;letter-spacing:-0.547px;">2.2</span><span class="t fs" style="top:623px;font-size:25px;color:#1a1a1a;left:1476.70px;letter-spacing:0.640px;">accessibility</span> <span class="t fs" style="top:623px;font-size:25px;color:#1a1a1a;left:1626.50px;letter-spacing:0.493px;">standards</span> <span class="t fs" style="top:623px;font-size:25px;color:#1a1a1a;left:1749.52px;letter-spacing:-0.312px;">and</span> <span class="t fs" style="top:623px;font-size:25px;color:#1a1a1a;left:1800.16px;letter-spacing:0.476px;">provides</span> <span class="t fs" style="top:623px;font-size:25px;color:#1a1a1a;left:1906.75px;">a</span><span class="t fs" style="top:660px;font-size:25px;color:#1a1a1a;left:1476.70px;letter-spacing:1.105px;">better</span> <span class="t fs" style="top:660px;font-size:25px;color:#1a1a1a;left:1554.65px;letter-spacing:0.344px;">experience</span> <span class="t fs" style="top:660px;font-size:25px;color:#1a1a1a;left:1689.34px;letter-spacing:0.386px;">for</span> <span class="t fs" style="top:660px;font-size:25px;color:#1a1a1a;left:1728.31px;letter-spacing:0.159px;">users</span> <span class="t fs" style="top:660px;font-size:25px;color:#1a1a1a;left:1799.37px;letter-spacing:0.643px;">with</span><span class="t fs" style="top:698px;font-size:25px;color:#1a1a1a;left:1476.70px;letter-spacing:0.526px;">disabilities.</span><span class="t fs" style="top:769px;font-size:23px;color:#9a9a9a;left:1507.40px;letter-spacing:0.317px;">Review Changes</span><svg style="left:0;top:0" width="1999" height="1247" viewBox="0 0 1999 1247"><g stroke="#b4b4b4" stroke-width="1.9"><path d="M1475.3 771H1496M1475.3 776.4H1496M1475.3 781.8H1487M1489.6 781.8H1496M1475.3 787.2H1496"/></g><path d="M1805.2 778.5L1810.6 771.2Q1812 769.7 1813 771.4L1812.6 777.4H1815.6Q1818.4 777.6 1818 780.2L1816.8 787.6Q1816.400 789.9 1813.800 789.9H1806Q1799.400 789.400 1799.600 784Q1799.800 778.9 1805.200 778.5Q1802.700 784 1805.800 789.600" fill="none" stroke="#a8a8a8" stroke-width="1.7" stroke-linecap="round" stroke-linejoin="round"/><path transform="translate(3663.7,1560.6) scale(-1,-1)" d="M1805.2 778.5L1810.6 771.2Q1812 769.7 1813 771.4L1812.6 777.4H1815.6Q1818.4 777.6 1818 780.2L1816.8 787.6Q1816.400 789.9 1813.800 789.9H1806Q1799.400 789.400 1799.600 784Q1799.800 778.9 1805.200 778.5Q1802.700 784 1805.800 789.600" fill="none" stroke="#a8a8a8" stroke-width="1.7" stroke-linecap="round" stroke-linejoin="round"/><g fill="none" stroke="#a8a8a8" stroke-width="1.8" stroke-linejoin="round"><rect x="1896.6" y="776.2" width="13.6" height="13.6" rx="2.800"/><path d="M1894 785.400a2.800 2.800 0 0 1 -2.400 -2.800V774.400a2.800 2.800 0 0 1 2.800 -2.800H1902.600a2.800 2.800 0 0 1 2.800 2.400"/></g><circle cx="1940.5" cy="781.1" r="1.8" fill="#a8a8a8"/><circle cx="1947.3" cy="781.1" r="1.8" fill="#a8a8a8"/><circle cx="1954.1" cy="781.1" r="1.8" fill="#a8a8a8"/></svg><div class="a" style="left:1983.6px;top:850.2px;width:15.4px;height:78.6px;background:#c1c1c1;"></div><div class="a" style="left:1475.0px;top:930.2px;width:487.1px;height:69.8px;background:#fcfcfc;border-radius:10px;"></div><span class="t fs" style="top:948px;font-size:23px;color:#787878;left:1526.10px;letter-spacing:0.325px;">3 Files</span><div class="a" style="left:1847.4px;top:938.3px;width:106.0px;height:38.6px;background:#969ba8;border-radius:8px;"></div><span class="t fs" style="top:947px;font-size:23px;color:#fff;left:1856.70px;letter-spacing:0.528px;-webkit-text-stroke:0.5px #fff;">Keep All</span><div class="a" style="left:1457.3px;top:983.9px;width:522.4px;height:200.8px;background:#fcfcfc;border:1.2px solid #e2e2e2;border-radius:11px;"></div><div class="a" style="left:1473.6px;top:1001.2px;width:38.3px;height:37.8px;border:1.2px solid #e4e4e4;border-radius:6px;"></div><span class="t fs" style="top:1009px;font-size:20.5px;color:#9a9a9a;left:1482.60px;">@</span><div class="a" style="left:1519.7px;top:1001.2px;width:104.9px;height:37.8px;border:1.2px dashed #dcdcdc;border-radius:6px;"></div><span class="t fs" style="top:1010px;font-size:23px;color:#8a8a8a;left:1559.70px;letter-spacing:-0.065px;">1 Tab</span><div class="a" style="left:1846.9px;top:1002.0px;width:116.0px;height:34.2px;background:#fff;border-radius:7px;box-shadow:0 1px 4px rgba(0,0,0,0.16);"></div><span class="t fs" style="top:1009px;font-size:23px;color:#b2b2b2;left:1855.80px;letter-spacing:0.695px;">32.6%</span><span class="t fs" style="top:1059px;font-size:23.5px;color:#b9b9b9;left:1475.20px;letter-spacing:-0.120px;">Plan,</span> <span class="t fs" style="top:1059px;font-size:23.5px;color:#b9b9b9;left:1538.50px;letter-spacing:0.854px;">search,</span> <span class="t fs" style="top:1059px;font-size:23.5px;color:#b9b9b9;left:1631.40px;letter-spacing:1.111px;">build</span> <span class="t fs" style="top:1059px;font-size:23.5px;color:#b9b9b9;left:1694.60px;letter-spacing:1.463px;">anything</span><div class="a" style="left:1473.0px;top:1055.2px;width:1.8px;height:29.4px;background:#7c7c7c;"></div><div class="a" style="left:1473.6px;top:1129.9px;width:108.2px;height:38.0px;background:#efefef;border-radius:19px;"></div><span class="t fd" style="top:1141px;font-size:17.5px;color:#b4b4b4;left:1520.80px;">⌘</span><span class="t fm" style="top:1139px;font-size:19px;color:#b4b4b4;left:1537.60px;">I</span><span class="t fs" style="top:1139px;font-size:22.5px;color:#a0a0a0;left:1598.80px;letter-spacing:0.801px;">Auto</span><div class="a" style="left:1925.0px;top:1130.0px;width:37.8px;height:37.8px;background:#cdcdcd;border-radius:50%;"></div><svg style="left:0;top:0" width="1999" height="1247" viewBox="0 0 1999 1247"><polyline points="1499.0,951.5 1505.2,957.9 1499.0,964.3" fill="none" stroke="#8a8a8a" stroke-width="1.6" stroke-linecap="round" stroke-linejoin="round"/><g fill="none" stroke="#7a7a7a" stroke-width="1.6" stroke-linejoin="round"><path d="M1536.8 1015.6H1534.8a1.800 1.800 0 0 0 -1.800 1.800V1027a1.800 1.800 0 0 0 1.800 1.800H1541.4a1.800 1.800 0 0 0 1.800 -1.800V1025.8"/><path d="M1538.6 1010.8H1543.2L1547.200 1014.8V1022.4a1.800 1.800 0 0 1 -1.800 1.800H1538.6a1.800 1.800 0 0 1 -1.800 -1.800V1012.6a1.800 1.800 0 0 1 1.800 -1.800ZM1543.200 1010.8V1014.8H1547.2"/></g><circle cx="1945.6" cy="1019.4" r="10.2" fill="none" stroke="#dedede" stroke-width="2.6"/><path d="M1945.6 1009.2A10.200 10.200 0 0 1 1954.2 1024.9" fill="none" stroke="#777" stroke-width="2.6" stroke-linecap="round"/><path d="M1500.700 1148.8C1497.800 1144.800 1495.600 1143.600 1493.600 1143.600C1490.600 1143.600 1488.600 1146 1488.600 1148.800C1488.600 1151.600 1490.600 1154 1493.600 1154C1495.600 1154 1497.800 1152.800 1500.700 1148.800C1503.600 1144.800 1505.800 1143.600 1507.800 1143.600C1510.800 1143.600 1512.800 1146 1512.800 1148.800C1512.800 1151.600 1510.800 1154 1507.800 1154C1505.800 1154 1503.600 1152.800 1500.700 1148.800Z" fill="none" stroke="#b0b0b0" stroke-width="2.1"/><polyline points="1556.2,1151.1 1562.0,1145.7 1567.8,1151.1" fill="none" stroke="#a0a0a0" stroke-width="1.6" stroke-linecap="round" stroke-linejoin="round"/><polyline points="1660.0,1151.1 1665.8,1145.7 1671.6,1151.1" fill="none" stroke="#b0b0b0" stroke-width="1.6" stroke-linecap="round" stroke-linejoin="round"/><g fill="none" stroke="#a6a6a6" stroke-width="1.7" stroke-linejoin="round"><rect x="1881.6" y="1141.2" width="21.2" height="16.8" rx="2"/><circle cx="1888" cy="1146.600" r="1.6" fill="#a6a6a6"/><path d="M1882 1156.200L1889.200 1150.600L1893 1153.400L1897.800 1149L1902.600 1153.600" /></g><path d="M1882.5 1156.6L1889.200 1151.200L1893 1154L1897.800 1149.600L1902.300 1154V1157.300H1882.500Z" fill="#b0b0b0"/><path d="M1943.9 1157.2V1141M1936.8 1148.2L1943.9 1141L1951 1148.2" fill="none" stroke="#fff" stroke-width="1.9" stroke-linecap="round" stroke-linejoin="round"/></svg><span class="t fs" style="top:1215px;font-size:23px;color:#fff;left:822.90px;letter-spacing:0.636px;">Cursor Tab</span><span class="t fs" style="top:1215px;font-size:23px;color:#fff;left:1006.60px;letter-spacing:0.421px;">René Winkelmeyer (6 years ago)</span><span class="t fs" style="top:1215px;font-size:23px;color:#fff;left:1388.60px;letter-spacing:0.634px;">Ln 8, Col 20</span><span class="t fs" style="top:1215px;font-size:23px;color:#fff;left:1551.90px;letter-spacing:0.425px;">Spaces: 4</span><span class="t fs" style="top:1215px;font-size:23px;color:#fff;left:1689.70px;letter-spacing:0.957px;">UTF-8</span><span class="t fs" style="top:1215px;font-size:23px;color:#fff;left:1791.50px;letter-spacing:-2.244px;">LF</span><span class="t fs" style="top:1215px;font-size:23px;color:#fff;left:1848.30px;letter-spacing:0.358px;">HTML</span><svg style="left:0;top:0" width="1999" height="1247" viewBox="0 0 1999 1247"><g fill="none" stroke="#fff" stroke-width="1.8"><circle cx="986.1" cy="1225" r="5.1"/><path d="M986.1 1212.2V1219.9M986.1 1230.1V1237.800" stroke-linecap="round"/></g><g fill="none" stroke="#fff" stroke-width="1.8" stroke-linejoin="round"><path d="M1947.600 1232.400C1949.400 1229 1949 1226.600 1949 1223.600C1949 1217.800 1952.400 1214.200 1956.800 1214.200C1961.200 1214.200 1964.600 1217.800 1964.600 1223.600C1964.600 1226.600 1964.200 1229 1966 1232.400Z"/><path d="M1953.800 1232.600A3 3 0 0 0 1959.800 1232.600"/></g></svg></div>
</body></html>
